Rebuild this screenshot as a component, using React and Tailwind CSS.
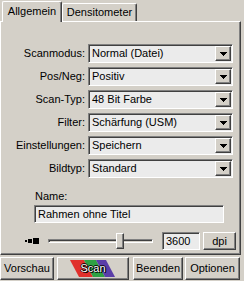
import React from 'react';

const raised =
  'border border-t-white border-l-white border-r-[#404040] border-b-[#404040] shadow-[inset_-1px_-1px_#808080]';
const sunken =
  'border border-t-[#808080] border-l-[#808080] border-r-white border-b-white shadow-[inset_1px_1px_#404040]';

const rows = [
  ['Scanmodus', 'Normal (Datei)'],
  ['Pos/Neg', 'Positiv'],
  ['Scan-Typ', '48 Bit Farbe'],
  ['Filter', 'Schärfung (USM)'],
  ['Einstellungen', 'Speichern'],
  ['Bildtyp', 'Standard'],
];

const Combo = ({ value }) => (
  <div className={`flex h-[19px] w-[145px] items-center bg-[#ebebeb] ${sunken}`}>
    <span className="flex-1 pl-[3px] leading-none">{value}</span>
    <div className={`mr-[1px] flex h-[15px] w-[16px] items-center justify-center bg-[#d4d0c8] ${raised}`}>
      <svg width="7" height="4" shapeRendering="crispEdges">
        <rect x="0" y="0" width="7" height="1" fill="#000" />
        <rect x="1" y="1" width="5" height="1" fill="#000" />
        <rect x="2" y="2" width="3" height="1" fill="#000" />
        <rect x="3" y="3" width="1" height="1" fill="#000" />
      </svg>
    </div>
  </div>
);

const Button = ({ children, className = '' }) => (
  <div className={`flex items-center justify-center bg-[#d4d0c8] ${raised} ${className}`}>{children}</div>
);

export default function App() {
  return (
    <div className="h-[281px] w-[244px] overflow-hidden bg-[#d4d0c8] font-['Liberation_Sans',Arial,sans-serif] text-[11px] text-black">
      {/* tabs */}
      <div className="flex h-[21px] items-end pl-[2px]">
        <div className="relative z-10 mb-[-1px] flex h-[21px] w-[60px] items-center justify-center rounded-t-[2px] border-l border-t border-r border-l-white border-t-white border-r-[#404040] bg-[#d4d0c8] pb-[1px] shadow-[inset_-1px_0_#808080]">
          Allgemein
        </div>
        <div className="flex h-[18px] w-[75px] items-center justify-center rounded-t-[2px] border-l border-t border-r border-l-white border-t-white border-r-[#404040] shadow-[inset_-1px_0_#808080]">
          Densitometer
        </div>
      </div>

      {/* panel */}
      <div className={`h-[234px] w-[241px] pt-[22px] ${raised}`}>
        <div className="flex flex-col gap-[4px]">
          {rows.map(([label, value]) => (
            <div key={label} className="flex h-[19px] items-center">
              <span className="w-[87px] pr-[3px] text-right">{label}:</span>
              <Combo value={value} />
            </div>
          ))}
        </div>

        <div className="mt-[12px] h-[13px] pl-[34px] leading-[13px]">Name:</div>
        <div className="mt-[2px] pl-[33px]">
          <div className={`flex h-[18px] w-[190px] items-center bg-[#ebebeb] pl-[3px] ${sunken}`}>
            Rahmen ohne Titel
          </div>
        </div>

        <div className="mt-[9px] flex h-[18px] items-center">
          <svg className="ml-[24px]" width="15" height="6" shapeRendering="crispEdges">
            <rect x="0" y="2" width="2" height="2" fill="#000" />
            <rect x="3" y="1" width="4" height="4" fill="#000" />
            <rect x="8" y="0" width="6" height="6" fill="#000" />
          </svg>
          <div className="relative ml-[8px] h-[18px] w-[105px]">
            <div className={`absolute left-0 right-0 top-[7px] h-[4px] ${sunken}`} />
            <div className={`absolute left-[68px] top-[1px] h-[16px] w-[8px] bg-[#d4d0c8] ${raised}`} />
          </div>
          <div className={`ml-[9px] flex h-[18px] w-[38px] items-center bg-[#ebebeb] pl-[3px] ${sunken}`}>3600</div>
          <Button className="ml-[3px] h-[18px] w-[33px]">dpi</Button>
        </div>
      </div>

      {/* bottom buttons */}
      <div className="mt-[2px] flex h-[23px]">
        <Button className="w-[54px]">Vorschau</Button>
        <div className={`relative ml-[3px] w-[72px] overflow-hidden bg-[#d4d0c8] ${raised}`}>
          <svg className="absolute left-[12px] top-[2px]" width="46" height="17">
            <polygon points="0,0 14,0 23,17 9,17" fill="#e0302c" />
            <polygon points="14,0 26,0 35,17 23,17" fill="#2ea043" />
            <polygon points="26,0 36,0 45,17 35,17" fill="#5a3ea8" />
          </svg>
          <span className="relative flex h-full items-center justify-center pb-[1px] text-white [text-shadow:1px_1px_0_#000,-1px_0_0_#000,0_-1px_0_#000,1px_0_0_#000]">
            Scan
          </span>
        </div>
        <Button className="ml-[4px] w-[50px]">Beenden</Button>
        <Button className="ml-[2px] w-[55px]">Optionen</Button>
      </div>
    </div>
  );
}
